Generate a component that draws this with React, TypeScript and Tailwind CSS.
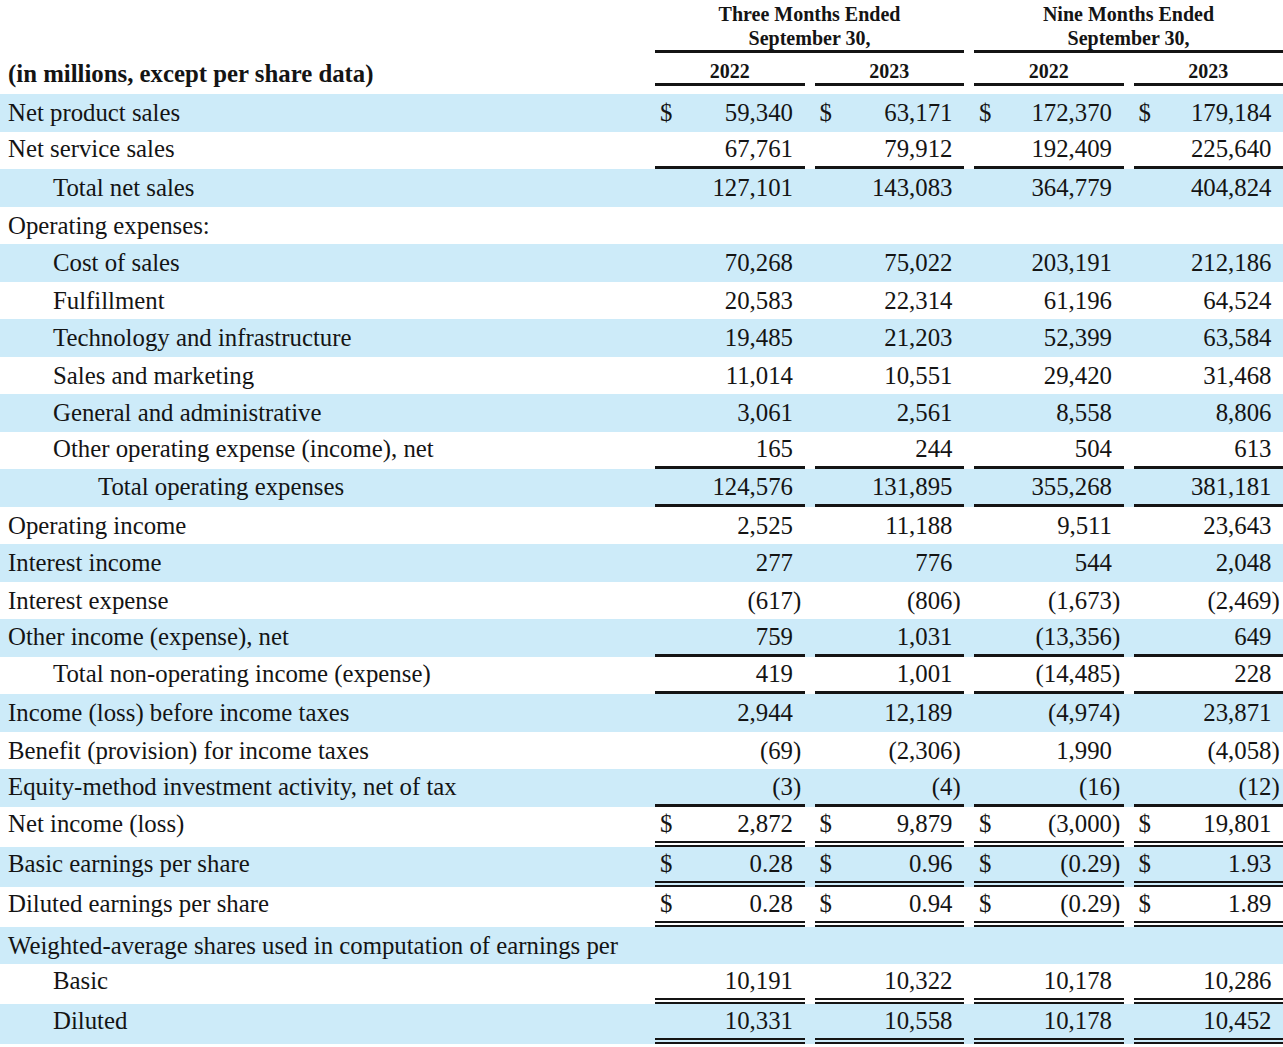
type Line = 'none' | 'single' | 'double'

type Ligne = {
  label: string
  indent: 0 | 1 | 2
  values?: string[]
  dollar?: boolean
  line?: Line
}

const lignes: Ligne[] = [
  { label: 'Net product sales', indent: 0, dollar: true, values: ['59,340', '63,171', '172,370', '179,184'] },
  { label: 'Net service sales', indent: 0, values: ['67,761', '79,912', '192,409', '225,640'], line: 'single' },
  { label: 'Total net sales', indent: 1, values: ['127,101', '143,083', '364,779', '404,824'] },
  { label: 'Operating expenses:', indent: 0 },
  { label: 'Cost of sales', indent: 1, values: ['70,268', '75,022', '203,191', '212,186'] },
  { label: 'Fulfillment', indent: 1, values: ['20,583', '22,314', '61,196', '64,524'] },
  { label: 'Technology and infrastructure', indent: 1, values: ['19,485', '21,203', '52,399', '63,584'] },
  { label: 'Sales and marketing', indent: 1, values: ['11,014', '10,551', '29,420', '31,468'] },
  { label: 'General and administrative', indent: 1, values: ['3,061', '2,561', '8,558', '8,806'] },
  { label: 'Other operating expense (income), net', indent: 1, values: ['165', '244', '504', '613'], line: 'single' },
  { label: 'Total operating expenses', indent: 2, values: ['124,576', '131,895', '355,268', '381,181'], line: 'single' },
  { label: 'Operating income', indent: 0, values: ['2,525', '11,188', '9,511', '23,643'] },
  { label: 'Interest income', indent: 0, values: ['277', '776', '544', '2,048'] },
  { label: 'Interest expense', indent: 0, values: ['(617)', '(806)', '(1,673)', '(2,469)'] },
  { label: 'Other income (expense), net', indent: 0, values: ['759', '1,031', '(13,356)', '649'], line: 'single' },
  { label: 'Total non-operating income (expense)', indent: 1, values: ['419', '1,001', '(14,485)', '228'], line: 'single' },
  { label: 'Income (loss) before income taxes', indent: 0, values: ['2,944', '12,189', '(4,974)', '23,871'] },
  { label: 'Benefit (provision) for income taxes', indent: 0, values: ['(69)', '(2,306)', '1,990', '(4,058)'] },
  { label: 'Equity-method investment activity, net of tax', indent: 0, values: ['(3)', '(4)', '(16)', '(12)'], line: 'single' },
  { label: 'Net income (loss)', indent: 0, dollar: true, values: ['2,872', '9,879', '(3,000)', '19,801'], line: 'double' },
  { label: 'Basic earnings per share', indent: 0, dollar: true, values: ['0.28', '0.96', '(0.29)', '1.93'], line: 'double' },
  { label: 'Diluted earnings per share', indent: 0, dollar: true, values: ['0.28', '0.94', '(0.29)', '1.89'], line: 'double' },
  { label: 'Weighted-average shares used in computation of earnings per', indent: 0 },
  { label: 'Basic', indent: 1, values: ['10,191', '10,322', '10,178', '10,286'], line: 'double' },
  { label: 'Diluted', indent: 1, values: ['10,331', '10,558', '10,178', '10,452'], line: 'double' },
]

const hauteur: Record<Line, string> = {
  none: 'h-[37.5px]',
  single: 'h-[37.5px] border-b-[3px]',
  double: 'h-[40px] border-b-[6px] border-double',
}

const retrait = ['pl-[8px]', 'pl-[53px]', 'pl-[98px]']

function Montant({ valeur, dollar, line }: { valeur: string; dollar?: boolean; line: Line }) {
  const negatif = valeur.endsWith(')')
  const corps = negatif ? valeur.slice(0, -1) : valeur
  return (
    <div className={`w-[149.5px] flex items-center pl-[5px] pr-[3px] border-[#141414] ${hauteur[line]}`}>
      <span className="w-[14px]">{dollar ? '$' : ''}</span>
      <span className="flex-1 text-right">{corps}</span>
      <span className="w-[8.5px]">{negatif ? ')' : ''}</span>
    </div>
  )
}

export default function App() {
  return (
    <div className="w-[1283px] h-[1047px] bg-white text-[#141414] font-['Liberation_Serif',serif] overflow-hidden">
      <div className="flex h-[94px]">
        <div className="w-[655px] pl-[8px] pt-[59px] leading-[30px] text-[24.8px] font-bold">
          (in millions, except per share data)
        </div>
        <div className="w-[628px] grid grid-cols-4 gap-x-[10px] content-start text-[20px] font-bold leading-[24px] text-center">
          <div className="col-span-2 pt-[2px] border-b-[3px] border-[#141414]">
            Three Months Ended
            <br />
            September 30,
          </div>
          <div className="col-span-2 pt-[2px] border-b-[3px] border-[#141414]">
            Nine Months Ended
            <br />
            September 30,
          </div>
          <div className="pt-[6px] border-b-[3px] border-[#141414]">2022</div>
          <div className="pt-[6px] border-b-[3px] border-[#141414]">2023</div>
          <div className="pt-[6px] border-b-[3px] border-[#141414]">2022</div>
          <div className="pt-[6px] border-b-[3px] border-[#141414]">2023</div>
        </div>
      </div>

      <div className="text-[24.8px]">
        {lignes.map((ligne, index) => {
          const line = ligne.line ?? 'none'
          return (
            <div
              key={index}
              className={`flex items-start ${index % 2 === 0 ? 'bg-[#cdebf9]' : 'bg-white'}`}
            >
              <div
                className={`w-[655px] flex items-center whitespace-nowrap border-transparent ${retrait[ligne.indent]} ${hauteur[line]}`}
              >
                {ligne.label}
              </div>
              {ligne.values && (
                <div className="flex gap-x-[10px]">
                  {ligne.values.map((v, i) => (
                    <Montant key={i} valeur={v} dollar={ligne.dollar} line={line} />
                  ))}
                </div>
              )}
            </div>
          )
        })}
      </div>
    </div>
  )
}
